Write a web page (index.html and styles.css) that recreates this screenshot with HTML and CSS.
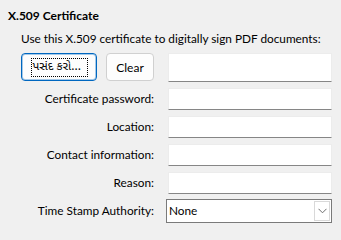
FILE: index.html
```html
<!DOCTYPE html>
<html>
<head>
<meta charset="utf-8">
<link rel="stylesheet" href="styles.css">
</head>
<body>
<div class="panel">
  <div class="title">X.509 Certificate</div>
  <div class="desc">Use this X.509 certificate to digitally sign PDF documents:</div>
  <div class="form">
    <div class="buttons">
      <button class="btn btn-browse"><span class="focus">પસંદ કરો...</span></button>
      <button class="btn btn-clear">Clear</button>
    </div>
    <div class="field field-tall"></div>

    <div class="label">Certificate password:</div>
    <div class="field"></div>

    <div class="label">Location:</div>
    <div class="field"></div>

    <div class="label">Contact information:</div>
    <div class="field"></div>

    <div class="label">Reason:</div>
    <div class="field"></div>

    <div class="label label-combo">Time Stamp Authority:</div>
    <div class="combo">
      <span class="combo-text">None</span>
      <span class="combo-btn">
        <svg width="9" height="6" viewBox="0 0 9 6"><path d="M0.5 0.8 L4.5 4.8 L8.5 0.8" fill="none" stroke="#6d6d6d" stroke-width="1"/></svg>
      </span>
    </div>
  </div>
</div>
</body>
</html>
```
FILE: styles.css
```css
html, body {
  margin: 0;
  padding: 0;
  background: #f0f0f0;
}
body {
  width: 341px;
  height: 231px;
  overflow: hidden;
  font-family: "Lato", "Noto Sans", sans-serif;
  font-size: 11.8px;
  color: #000;
}
.panel {
  padding: 7px 9px 0 8px;
}
.title {
  font-weight: bold;
  font-size: 12px;
  height: 17px;
  line-height: 17px;
}
.desc {
  margin-top: 6px;
  padding-left: 13px;
  height: 17px;
  line-height: 17px;
  white-space: nowrap;
}
.form {
  margin-top: 6px;
  margin-left: 13px;
  display: grid;
  grid-template-columns: 133px 164px;
  column-gap: 14px;
  grid-auto-rows: 22px;
  row-gap: 6px;
  grid-template-rows: 29px;
}
.buttons {
  display: flex;
  gap: 9px;
  height: 28px;
}
.btn {
  margin: 0;
  padding: 0;
  font-family: inherit;
  font-size: 12px;
  background: #fdfdfd;
  border: 1px solid #d0d0d0;
  border-radius: 4px;
  color: #000;
  height: 28px;
  display: flex;
  align-items: center;
  justify-content: center;
}
.btn-browse {
  width: 76px;
  border: 1px solid #0067c0;
  box-shadow: inset 0 0 0 1px rgba(0, 103, 192, 0.35);
}
.btn-clear {
  width: 48px;
}
.focus {
  border: 1px dotted #000;
  width: 57px;
  height: 19px;
  line-height: 17px;
  display: block;
  text-align: left;
  padding-left: 1px;
  box-sizing: border-box;
  font-family: "Noto Sans Gujarati", "Noto Sans", sans-serif;
  font-size: 12px;
  white-space: nowrap;
  overflow: hidden;
}
.field {
  background: #fff;
  border: 1px solid #ececec;
  border-bottom: 1px solid #868686;
  box-sizing: border-box;
  height: 22px;
}
.field-tall {
  height: 29px;
}
.label {
  text-align: right;
  line-height: 22px;
  white-space: nowrap;
}
.label-combo {
  line-height: 24px;
}
.form > .label-combo {
  margin-top: -1px;
}
.combo {
  margin-left: -2px;
  margin-top: -1px;
  height: 24px;
  box-sizing: border-box;
  background: #fff;
  border: 1px solid #7a7a7a;
  display: flex;
  align-items: center;
  padding: 0 1px 0 2px;
}
.combo-text {
  flex: 1;
  line-height: 20px;
}
.combo-btn {
  width: 16px;
  height: 20px;
  box-sizing: border-box;
  border: 1px solid #d9d9d9;
  display: flex;
  align-items: center;
  justify-content: center;
}
```
